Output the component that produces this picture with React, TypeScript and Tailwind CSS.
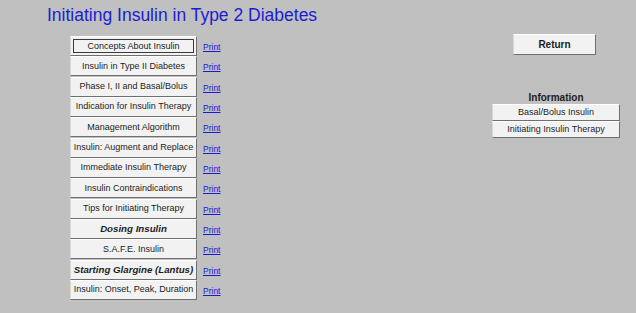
import React from 'react';

const topics = [
  { label: 'Concepts About Insulin', focus: true },
  { label: 'Insulin in Type II Diabetes' },
  { label: 'Phase I, II and Basal/Bolus' },
  { label: 'Indication for Insulin Therapy' },
  { label: 'Management Algorithm' },
  { label: 'Insulin: Augment and Replace' },
  { label: 'Immediate Insulin Therapy' },
  { label: 'Insulin Contraindications' },
  { label: 'Tips for Initiating Therapy' },
  { label: 'Dosing Insulin', strong: true },
  { label: 'S.A.F.E. Insulin' },
  { label: 'Starting Glargine (Lantus)', strong: true },
  { label: 'Insulin: Onset, Peak, Duration' },
];

const btn =
  'flex items-center justify-center bg-[#f2f2f2] text-[#1c1c1c] border border-t-white border-l-[#d8d8d8] border-r-[#6f6f6f] border-b-[#6f6f6f] leading-none whitespace-nowrap';

function TopicRow({ label, focus, strong }: { label: string; focus?: boolean; strong?: boolean }) {
  return (
    <div className="flex items-center">
      <button className={`${btn} h-[20px] w-[127px] p-[2px]`}>
        <span
          className={`flex h-full w-full items-center justify-center ${
            focus ? 'border border-[#3a3a3a]' : ''
          } ${strong ? 'text-[9.7px] font-bold italic' : 'text-[9px]'}`}
        >
          {label}
        </span>
      </button>
      <a href="#" className="ml-[6px] mt-[3px] text-[8.5px] text-[#1a1ad6] underline">
        Print
      </a>
    </div>
  );
}

export default function App() {
  return (
    <div
      className="h-[313px] w-[636px] overflow-hidden bg-[#c0c0c0]"
      style={{ fontFamily: '"Liberation Sans", Arial, sans-serif' }}
    >
      <h1 className="pl-[47px] pt-[5px] text-[17.5px] leading-[20px] text-[#1c1cd2]">
        Initiating Insulin in Type 2 Diabetes
      </h1>
      <div className="flex pl-[70px] pt-[11px]">
        <div className="flex w-[422px] flex-col gap-[0.33px]">
          {topics.map((t) => (
            <TopicRow key={t.label} {...t} />
          ))}
        </div>
        <div className="flex w-[128px] flex-col items-center">
          <button className={`${btn} -mt-[2px] ml-[-3px] h-[21px] w-[83px] text-[10px] font-bold`}>
            Return
          </button>
          <div className="mt-[37px] text-[10px] font-bold leading-[11px] text-[#1c1c1c]">Information</div>
          <button className={`${btn} mt-[1px] h-[17px] w-[128px] text-[9px]`}>Basal/Bolus Insulin</button>
          <button className={`${btn} h-[17px] w-[128px] text-[9px]`}>Initiating Insulin Therapy</button>
        </div>
      </div>
    </div>
  );
}
